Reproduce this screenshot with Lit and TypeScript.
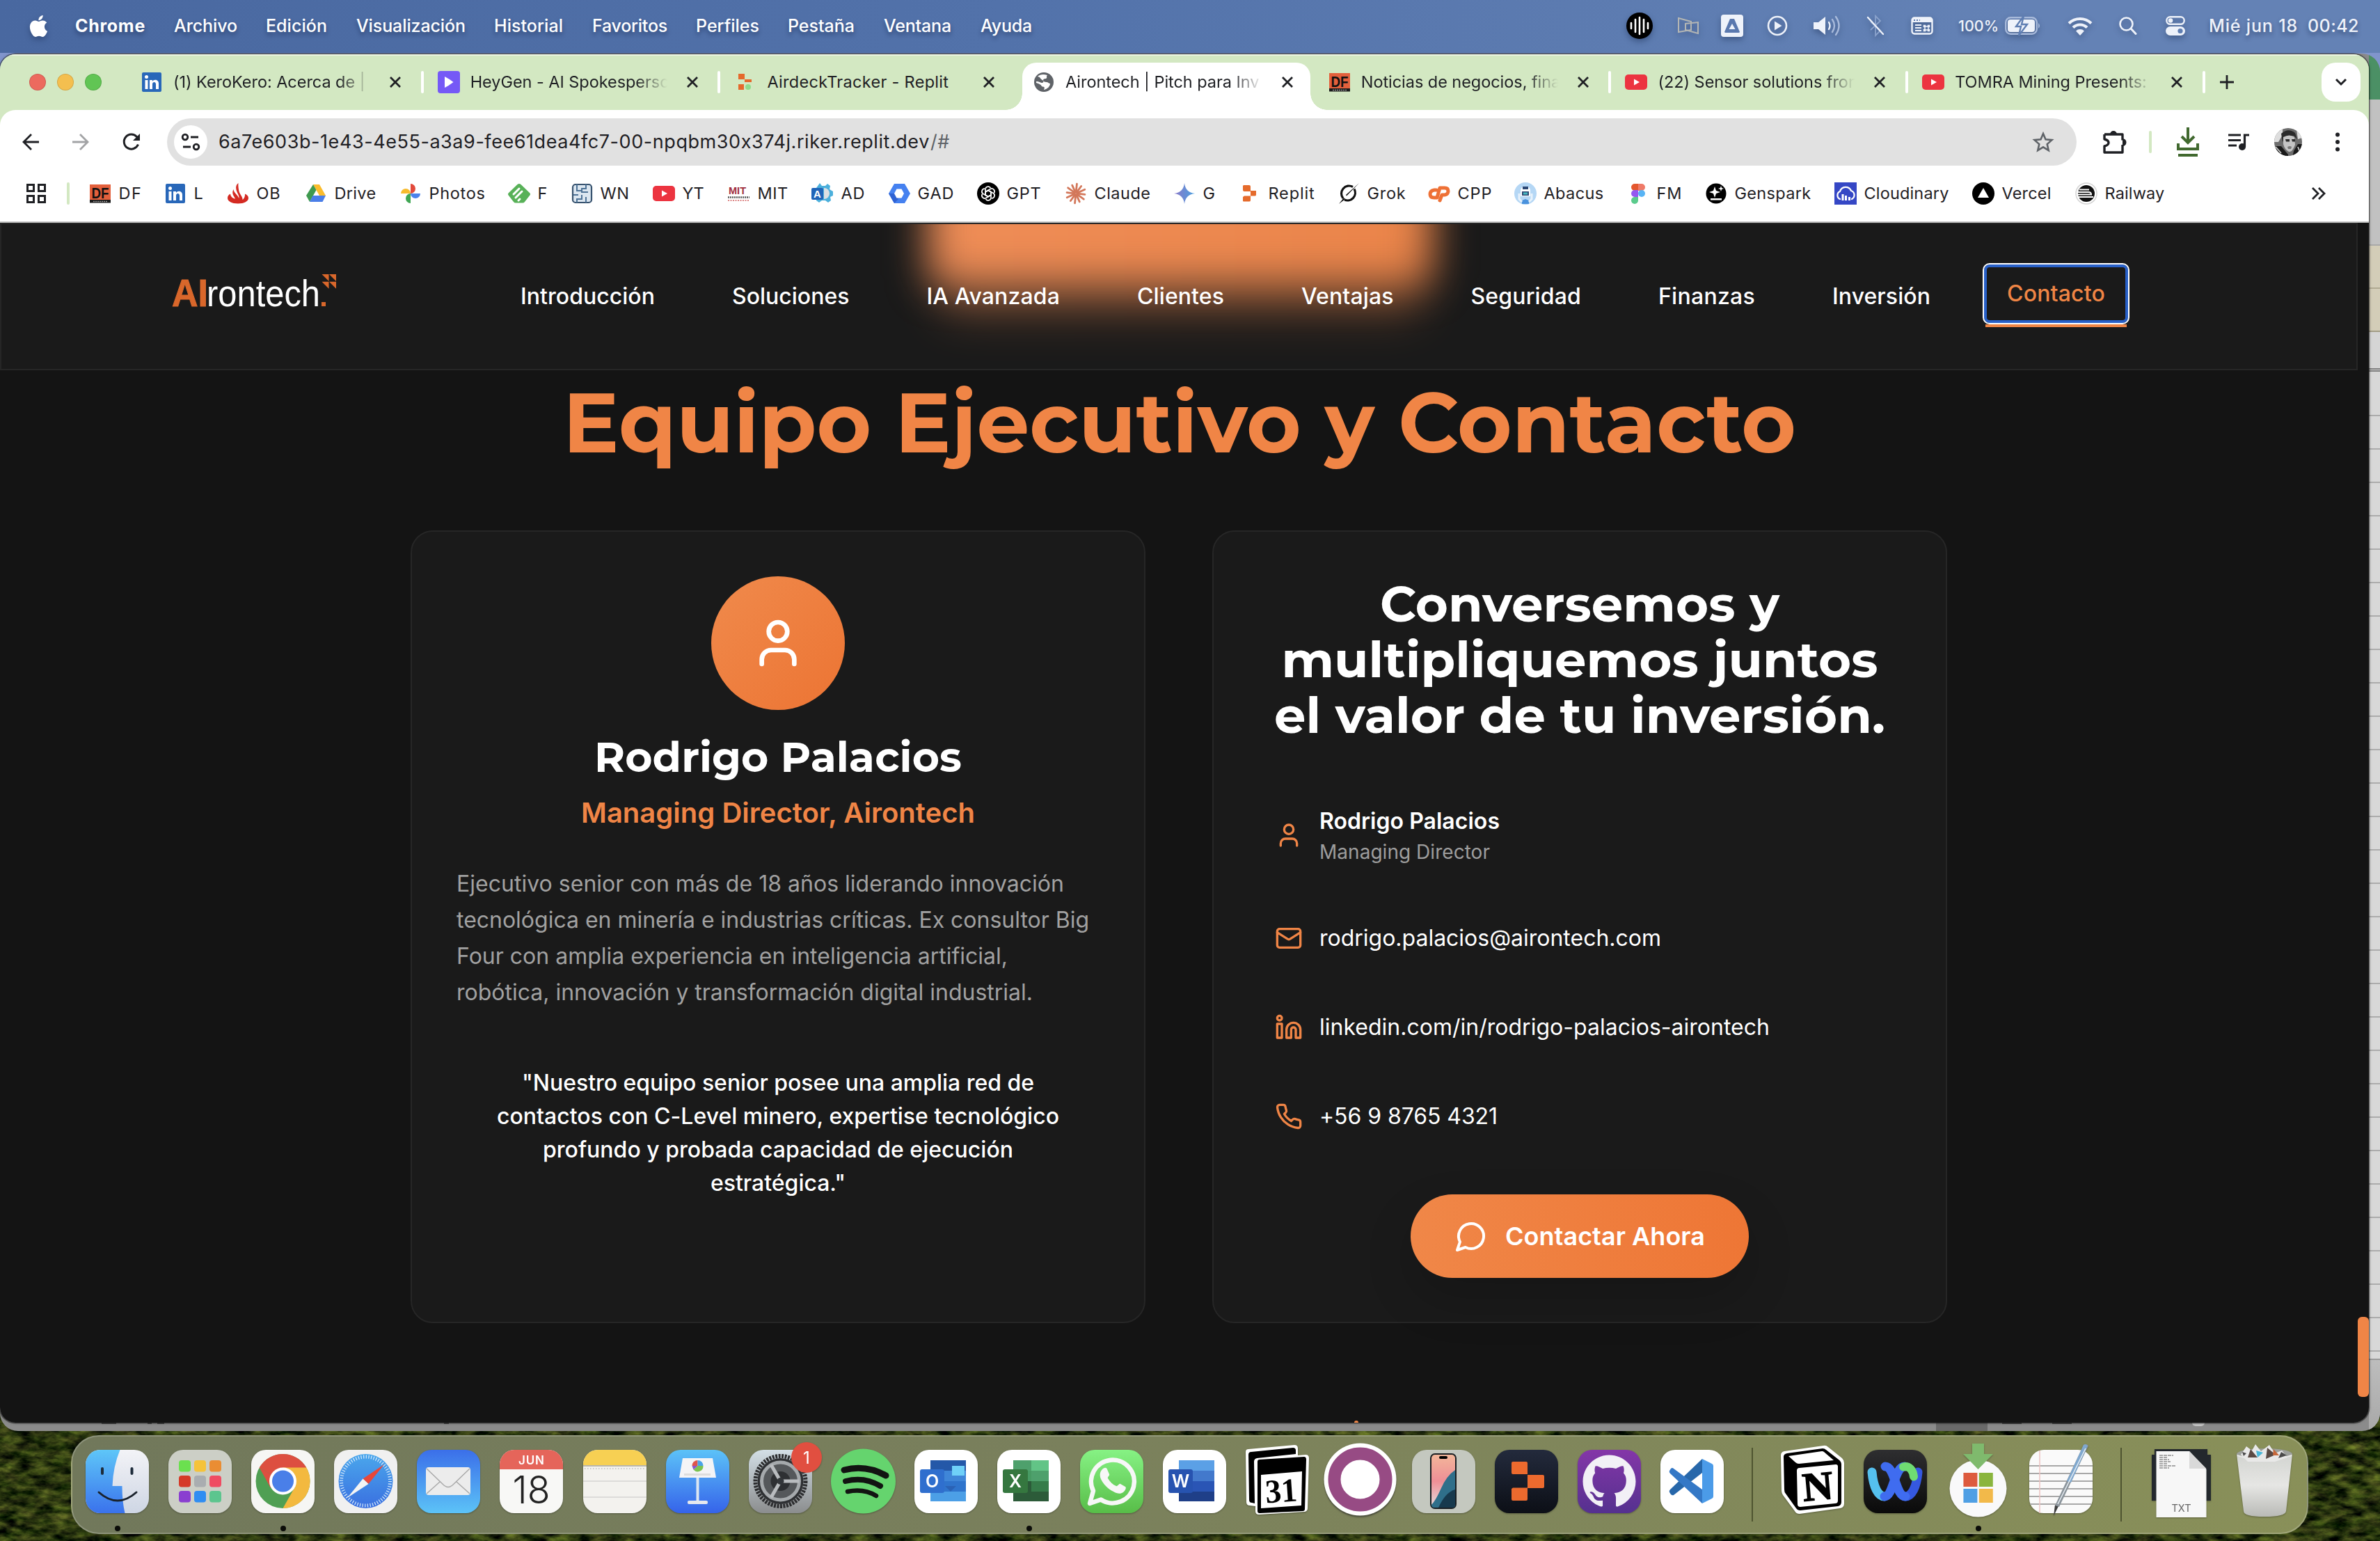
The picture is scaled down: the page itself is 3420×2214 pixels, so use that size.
import { LitElement, html, svg, css, type TemplateResult, type SVGTemplateResult } from "lit";
import { customElement, property } from "lit/decorators.js";
import { classMap } from "lit/directives/class-map.js";

const FONT = css`"Inter", "Liberation Sans", sans-serif`;

/* A run of text tracked to an exact measure. */
@customElement("fit-text")
class FitText extends LitElement {
  @property({ type: Number }) width = 0;
  static styles = css`
    :host { display: inline-block; white-space: pre; flex: none; }
    span { display: inline-block; }
  `;
  render() { return html`<span><slot></slot></span>`; }
  firstUpdated() {
    this.fit();
    document.fonts.ready.then(() => this.fit());
  }
  private fit() {
    const el = this.renderRoot.querySelector("span") as HTMLElement;
    el.style.letterSpacing = "0px";
    const natural = el.getBoundingClientRect().width;
    const n = (this.textContent ?? "").length;
    if (!natural || !n) return;
    this.style.width = `${this.width}px`;
    el.style.letterSpacing = `${(this.width - natural) / n}px`;
  }
}

const icon = (size: number, box: string, body: SVGTemplateResult, w = size) =>
  html`<svg width=${w} height=${size} viewBox=${box} fill="none">${body}</svg>`;

/* ---------------------------------------------------------------- menu bar */

const MENUS: [string, number, number][] = [
  ["Chrome", 101, 41], ["Archivo", 91, 41], ["Edición", 88, 42], ["Visualización", 157, 41],
  ["Historial", 99, 42], ["Favoritos", 108, 41], ["Perfiles", 91, 41], ["Pestaña", 96, 42],
  ["Ventana", 97, 42], ["Ayuda", 74, 0],
];

@customElement("menu-bar")
class MenuBar extends LitElement {
  static styles = css`
    :host { display: flex; align-items: center; justify-content: space-between; height: 76px; box-sizing: border-box;
      padding: 0 30px 2px 40px; color: #fff; font: 500 25px/36px ${FONT};
      background: linear-gradient(90deg, #4968a0, #5272aa 42%, #6482b5 85%, #6482b5);
      text-shadow: 0 4px 6px rgba(10, 25, 60, .45); }
    .menus, .status { display: flex; align-items: center; }
    svg { filter: drop-shadow(0 4px 4px rgba(10, 25, 60, .35)); overflow: visible; }
    .apple { width: 30px; margin-right: 38px; display: flex; }
    .menu { display: flex; }
    .menu.app { font-weight: 700; }
    .status svg { flex: none; }
    .pct { font-size: 21.5px; }
    .status { color: #eef2fa; }
  `;
  render() {
    const gap = (n: number) => html`<span style="width:${n}px"></span>`;
    return html`
      <div class="menus">
        <span class="apple">${icon(31, "0 0 24 24", svg`<path fill="#fff" d="M12.152 6.896c-.948 0-2.415-1.078-3.96-1.04-2.04.027-3.91 1.183-4.961 3.014-2.117 3.675-.546 9.103 1.519 12.09 1.013 1.454 2.208 3.09 3.792 3.039 1.52-.065 2.09-.987 3.935-.987 1.831 0 2.35.987 3.96.948 1.637-.026 2.676-1.48 3.676-2.948 1.156-1.688 1.636-3.325 1.662-3.415-.039-.013-3.182-1.221-3.22-4.857-.026-3.04 2.48-4.494 2.597-4.559-1.429-2.09-3.623-2.324-4.39-2.376-2-.156-3.675 1.09-4.61 1.09zM15.53 3.83c.843-1.012 1.4-2.427 1.245-3.83-1.207.052-2.662.805-3.532 1.818-.78.896-1.454 2.338-1.273 3.714 1.338.104 2.715-.688 3.559-1.701"/>`)}</span>
        ${MENUS.map(([t, w, g], i) => html`<span class=${classMap({ menu: true, app: i === 0 })} style="margin-right:${g}px"><fit-text width=${w}>${t}</fit-text></span>`)}
      </div>
      <div class="status">
        ${icon(38, "0 0 38 38", svg`<circle cx="19" cy="19" r="19" fill="#000"/><path stroke="#fff" stroke-width="2.6" stroke-linecap="round" d="M7 15v8M13 10v18M19 7v24M25 10v18M31 15v8"/>`)}
        ${gap(35)}
        ${icon(24, "0 0 32 24", svg`<path stroke="#b4b6b4" stroke-width="2" d="M2 1l18 5v12L2 21zM12 9l18-2v16l-18-5z"/>`, 32)}
        ${gap(31)}
        ${icon(32, "0 0 32 32", svg`<rect width="32" height="32" rx="4" fill="#eef2fa"/><path fill="#5a78ae" d="M13 6h6l8 19a2 2 0 0 1-2 1H7a2 2 0 0 1-2-1z"/><path fill="#eef2fa" d="M16 13l4.500 8h-9z"/>`)}
        ${gap(34)}
        ${icon(30, "0 0 30 30", svg`<circle cx="15" cy="15" r="13" stroke="#eef2fa" stroke-width="2.6"/><path fill="#eef2fa" d="M11 8.500l10.500 6.500L11 21.500z"/>`)}
        ${gap(37)}
        ${icon(30, "0 0 40 30", svg`<path fill="#eef2fa" d="M0 10h7l10-8v26l-10-8H0z"/><path stroke="#eef2fa" stroke-width="2.400" stroke-linecap="round" d="M22 10q3 5 0 10"/><path stroke="#a8badb" stroke-width="2.400" stroke-linecap="round" d="M27 6q6 9 0 18M32 2q9 13 0 26"/>`, 40)}
        ${gap(36)}
        ${icon(30, "0 0 26 30", svg`<path stroke="#8aa2cc" stroke-width="1.800" d="M6 21l14-13-7-7v28l7-7L6 9"/><path stroke="#eef2fa" stroke-width="2.400" stroke-linecap="round" d="M2 3l22 24"/>`, 26)}
        ${gap(38)}
        ${icon(26, "0 0 32 26", svg`<rect x="1.500" y="1.500" width="29" height="23" rx="3.500" stroke="#eef2fa" stroke-width="2.400"/><path fill="#eef2fa" d="M2 2h28v6H2z"/><path stroke="#eef2fa" stroke-width="2.200" d="M6 12h9M6 16h9M6 20h9"/><path stroke="#5a78ae" stroke-width="2" stroke-dasharray="2 2" d="M4 5h9"/><path stroke="#eef2fa" stroke-width="1.500" d="M20 14h5v5h-5zM18.500 12.500h2v2h-2zM24.500 12.500h2v2h-2zM18.500 18.500h2v2h-2zM24.500 18.500h2v2h-2z"/>`, 32)}
        ${gap(36)}
        <span class="pct"><fit-text width="58">100%</fit-text></span>
        ${gap(9)}
        ${icon(26, "0 0 52 26", svg`<rect x="1.200" y="1.200" width="44.600" height="23.600" rx="7" stroke="#a8badb" stroke-width="2.400"/><rect x="4" y="4" width="39" height="18" rx="4" fill="#eef2fa"/><path fill="#a8badb" d="M48 9q4 4 0 8z"/><path fill="#eef2fa" stroke="#5f7eb2" stroke-width="2.400" d="M27-1L16 14h7l-3 13 12-16h-8z"/>`, 52)}
        ${gap(38)}
        ${icon(27, "0 0 36 27", svg`<path stroke="#eef2fa" stroke-width="4.200" d="M2 9.500a23 23 0 0 1 32 0M8 15.500a14.500 14.500 0 0 1 20 0"/><path fill="#eef2fa" d="M18 27l-6-6.500a8.500 8.500 0 0 1 12 0z"/>`, 36)}
        ${gap(38)}
        ${icon(26, "0 0 26 26", svg`<circle cx="10.500" cy="10.500" r="9" stroke="#eef2fa" stroke-width="2.600"/><path stroke="#eef2fa" stroke-width="3" stroke-linecap="round" d="M17 17l7 7.500"/>`)}
        ${gap(41)}
        ${icon(28, "0 0 28 28", svg`<rect x="1.300" y="1.300" width="25.400" height="10.500" rx="5.200" stroke="#eef2fa" stroke-width="2.400"/><circle cx="7" cy="6.500" r="3.300" fill="#eef2fa"/><rect y="15" width="28" height="13" rx="6.500" fill="#eef2fa"/><circle cx="21" cy="21.500" r="3.600" fill="#5f7eb2"/>`)}
        ${gap(34)}
        <fit-text width="128">Mié jun 18</fit-text>
        ${gap(14)}
        <fit-text width="74">00:42</fit-text>
      </div>`;
  }
}

/* ------------------------------------------------------------ site favicons */

const F: Record<string, SVGTemplateResult> = {
  linkedin: svg`<rect x="2" y="2" width="28" height="28" rx="2" fill="#2867b9"/><circle cx="8.500" cy="8.500" r="2.500" fill="#fff"/><path fill="#fff" d="M6.500 13h4v13h-4zM13 13h4v2c2-3.500 9-3 9 3v8h-4v-7c0-4-5-4-5 0v7h-4z"/>`,
  heygen: svg`<rect width="32" height="32" rx="4" fill="#7559f6"/><path fill="#fff" d="M10 8q6 3 12.500 8Q16 21 10 24z"/>`,
  replitTab: svg`<path fill="#e5692c" d="M6 4h9v8H6zM15 12h10v4H15zM6 19h8v8H6z"/><circle cx="20" cy="23" r="4" fill="#8fdc8c"/>`,
  globe: svg`<circle cx="16" cy="16" r="14" fill="#5f6368"/><path fill="#fff" d="M7 8c4 0 4 4 7 5 2 1 2 3 0 4-2 .5-4-2-9-2v2c6 2 7 3 8 5 1 1 3 0 4 2l-1 3c5-1 9-5 9-9-2 0-3-2-5-2-3 0-5-1-5-3 1-3 4-1 5-3 1-1-1-2 1-4-6-2-11-1-14 2z"/>`,
  df: svg`<rect x="1" y="3" width="30" height="26" fill="#e3603c"/><rect x="1" y="25" width="30" height="4.500" fill="#1b1b1b"/><text x="16" y="22.500" text-anchor="middle" textLength="25" lengthAdjust="spacingAndGlyphs" font-size="22" font-family="Liberation Sans" font-weight="700" fill="#111">DF</text><path stroke="#999" stroke-width="1.500" stroke-dasharray="2 1" d="M6 27.500h20"/>`,
  youtube: svg`<rect y="5" width="32" height="22" rx="5" fill="#ec3440"/><path fill="#fff" d="M13 11.500l8 4.500-8 4.500z"/>`,
  santander: svg`<path fill="#d42a22" d="M5 16.500C2 18 1 20 1 22.500c0 4.500 6 8 15 8s15-3.500 15-8c0-2.500-1.500-4.500-5-6 .3 4-1 6.500-3.500 8.500.5-4-4-8-5-12-.8-4-1.500-8-1-12-3 2-4 5.500-3 9.500 1.200 5 4.500 8 4 12.500-2-5-7.500-8-8-13-1 2-1.500 3.500-1 6.500 .5 2.500 2 4 3.500 7C8 23 5.500 20.500 5 16.500z"/>`,
  drive: svg`<path fill="#fbbc2c" d="M12 3h9l9 16h-9z"/><path fill="#3f9a4f" d="M12 3l4.500 8L7 28l-5-9z"/><path fill="#4a7ee8" d="M11.500 19H30l-4.500 9H7z"/>`,
  photos: svg`<path fill="#e24a3b" d="M16 2a7 7 0 0 1 0 14z"/><path fill="#4b83ec" d="M16 16h14a7 7 0 0 1-14 0z"/><path fill="#3fa653" d="M16 16v14a7 7 0 0 1 0-14z"/><path fill="#f7bb2e" d="M16 16H2a7 7 0 0 1 14 0z"/>`,
  feedly: svg`<path fill="#58b158" d="M13.500 3q2.500-2 5 0L31 15q2 2 0 4l-7 9q-1 1.500-3 1.500H11q-2 0-3-1.500l-7-9q-2-2 0-4z"/><path stroke="#fff" stroke-width="3" stroke-linecap="round" d="M8 17l8-8M11 22l9-9M15 26l2-2"/>`,
  wn: svg`<rect x="3" y="3" width="27" height="26" rx="4" fill="#dbe6f0" stroke="#38536f" stroke-width="2.200"/><path stroke="#4d7296" stroke-width="2" d="M9 3v9h6M22 3v6h-6v5h9M9 29v-5h7v-6M22 29v-8M4 18h7"/>`,
  mit: svg`<text x="1" y="17" textLength="25" lengthAdjust="spacingAndGlyphs" font-size="15" font-family="Liberation Sans" font-weight="700" fill="#a03040">MIT</text><path stroke="#555" stroke-width="2.500" stroke-dasharray="2 1" d="M0 21.500h31"/><path stroke="#d88" stroke-width="1.800" stroke-dasharray="2 1.500" d="M0 26h31"/>`,
  ad: svg`<path fill="#4cb0dc" d="M12 1l3 4h5l3-3 4 3-1 5 5 3v6l-4 2 1 5-4 3-4-3h-5l-4 3-4-3V8z"/><path fill="#dcdfe3" d="M18 8a8 8 0 0 1 0 16z"/><rect y="8" width="17" height="17" rx="2" fill="#1f64b8"/><text x="8.500" y="22" text-anchor="middle" font-size="15" font-family="Liberation Sans" font-weight="700" fill="#fff">A</text>`,
  gad: svg`<path fill="#4581f0" d="M9 2h15l8 14-8 14H9L1 16z"/><path fill="#2f62d3" d="M1 16h10l4 8-6 6z"/><path fill="#fff" d="M12.500 9.500h7l3.500 6.500-3.500 6.500h-7L9 16z"/>`,
  gpt: svg`<circle cx="16" cy="16" r="16" fill="#000"/>${[0, 60, 120, 180, 240, 300].map(a => svg`<path transform="rotate(${a} 16 16)" stroke="#fff" stroke-width="1.700" d="M12 18.300V10a4 4 0 0 1 7.500-1.800M12 13.700l4-2.300 4 2.300"/>`)}`,
  claude: svg`${[0, 30, 60, 90, 120, 150, 180, 210, 240, 270, 300, 330].map((a, i) => svg`<path transform="rotate(${a + 6} 16 16)" stroke="#d3775a" stroke-width="2.800" stroke-linecap="round" d="M16 14V${i % 2 ? 3 : 2}"/>`)}`,
  gemini: svg`<defs><linearGradient id="gm"><stop offset="0" stop-color="#8b78c8"/><stop offset="1" stop-color="#4aa0e0"/></linearGradient></defs><path fill="url(#gm)" d="M16 1c1 9 6 14 15 15-9 1-14 6-15 15C15 22 10 17 1 16 10 15 15 10 16 1z"/>`,
  replit: svg`<path fill="#e56b2c" d="M7 4h8q2 0 2 2v7H8q-2 0-2-2V5zM17 12h8v6q0 1.500-2 1.500h-6zM8 19.500h9V26q0 1.500-2 1.500H7q-1 0-1-1V21z"/>`,
  grok: svg`<path stroke="#111" stroke-width="3.200" d="M24 9.500a11 11 0 0 1-14 15.500M8 23A11 11 0 0 1 22 6.500"/><path fill="#111" d="M31 1L13 19.500 12 18zM2 31l7-9 2 2z"/>`,
  cpp: svg`<path stroke="#ee7136" stroke-width="5" stroke-linecap="round" stroke-linejoin="round" d="M12 11H9q-6 1-6 6t6 5h4l4-14h7q5 0 5 4.500t-5 5.500h-4l-3 8"/>`,
  abacus: svg`<circle cx="16" cy="16" r="16" fill="#b5d7f5"/><path fill="#fff" d="M9 12q0-6 7-6t7 6v8H9z"/><path fill="#2c4773" d="M12 6h8v4h-8zM11 13h10v6H11z"/><path fill="#46b8c0" d="M13 14.500h6v3h-6z"/><path fill="#4a92dd" d="M11 26l5-2 5 2v5H11z"/><path stroke="#e8f2fb" stroke-width="3" d="M7 16v8l4 4M25 16v8l-4 4"/>`,
  figma: svg`<path fill="#e4572e" d="M16 2h-5a5 5 0 0 0 0 10h5z"/><path fill="#ef7a68" d="M16 2h5a5 5 0 0 1 0 10h-5z"/><path fill="#9557f0" d="M16 11h-5a5 5 0 0 0 0 10h5z"/><circle cx="21" cy="16" r="5" fill="#58b4f5"/><path fill="#5bcb8d" d="M16 21h-5a5 5 0 1 0 5 5z"/>`,
  genspark: svg`<circle cx="16" cy="16" r="14.500" fill="#000"/><path fill="#fff" d="M14 6l2 6 6 2-6 2-2 6-2-6-6-2 6-2zM23 5l1 3 3 1-3 1-1 3-1-3-3-1 3-1zM8 23h16v2.500H8z"/>`,
  cloudinary: svg`<rect width="32" height="32" fill="#3547c5"/><path stroke="#fff" stroke-width="2.200" stroke-linecap="round" d="M8 24a6 6 0 0 1 0-11 8.500 8.500 0 0 1 16-1 6.500 6.500 0 0 1 1 12"/><path fill="#fff" d="M10.500 17h3v9h-3zM15 19h3v7h-3zM20 21h3v5h-3z"/>`,
  vercel: svg`<circle cx="16" cy="16" r="16" fill="#000"/><path fill="#fff" d="M16 8l8 14H8z"/>`,
  railway: svg`<circle cx="16" cy="16" r="15" fill="#fff" stroke="#d4d4d4" stroke-width="1.500"/><circle cx="16" cy="16" r="12" fill="#111"/><path stroke="#fff" stroke-width="1.800" d="M4 14h15q4 0 4 3M4 17.500h20M4 21h22M6 10.500h14"/>`,
};

/* --------------------------------------------------------- browser chrome */

const TABS: [string, string, boolean][] = [
  ["linkedin", "(1) KeroKero: Acerca de |", true],
  ["heygen", "HeyGen - AI Spokesperso", true],
  ["replitTab", "AirdeckTracker - Replit", false],
  ["globe", "Airontech | Pitch para Inv", true],
  ["df", "Noticias de negocios, fina", true],
  ["youtube", "(22) Sensor solutions fron", true],
  ["youtube", "TOMRA Mining Presents:", true],
];

/* favicon, label, label width, distance to the next bookmark */
const MARKS: [string, string, number, number][] = [
  ["df", "DF", 34, 108], ["linkedin", "L", 15, 90], ["santander", "OB", 35, 112], ["drive", "Drive", 60, 136],
  ["photos", "Photos", 81, 156], ["feedly", "F", 15, 90], ["wn", "WN", 42, 118], ["youtube", "YT", 31, 108],
  ["mit", "MIT", 44, 120], ["ad", "AD", 35, 110], ["gad", "GAD", 53, 128], ["gpt", "GPT", 50, 126],
  ["claude", "Claude", 81, 156], ["gemini", "G", 19, 94], ["replit", "Replit", 67, 142], ["grok", "Grok", 56, 130],
  ["cpp", "CPP", 50, 124], ["abacus", "Abacus", 86, 162], ["figma", "FM", 37, 112], ["genspark", "Genspark", 110, 186],
  ["cloudinary", "Cloudinary", 122, 198], ["vercel", "Vercel", 71, 148], ["railway", "Railway", 86, 200],
];

@customElement("browser-chrome")
class BrowserChrome extends LitElement {
  static styles = css`
    :host { display: block; height: 242px; background: #d3e8c2; color: #1f2024; font: 400 23.500px/32px ${FONT};
      box-shadow: inset 0 2px 0 #eef7e6; }
    svg { display: block; flex: none; overflow: visible; }
    .tabs { display: flex; align-items: center; height: 80px; }
    .lights { display: flex; gap: 16px; width: 138px; padding-left: 42px; }
    .light { width: 24px; height: 24px; border-radius: 50%; box-sizing: border-box; border: 1.500px solid rgba(0, 0, 0, .12); }
    .light.r { background: #ec6a5e; } .light.y { background: #f4bf4f; } .light.g { background: #61c554; }
    .tab { display: flex; align-items: center; width: 426.700px; height: 80px; padding-left: 22px; box-sizing: border-box; position: relative; }
    .tab .name { width: 283px; margin-left: 15px; white-space: nowrap; letter-spacing: -.05px; }
    .tab .name.cut { -webkit-mask-image: linear-gradient(90deg, #000 84%, transparent 100%); mask-image: linear-gradient(90deg, #000 84%, transparent 100%); }
    .tab .x { margin-left: 28px; }
    .tab .bar { width: 4px; height: 32px; border-radius: 2px; background: #fff; margin-left: auto; position: relative; left: 2px; }
    .tab.on::before { content: ""; position: absolute; inset: 12px 4px 0 9px; border-radius: 20px 20px 0 0; background: #fff; }
    .tab.on::after { content: ""; position: absolute; bottom: 0; left: -15px; right: -20px; height: 24px;
      background: radial-gradient(circle at 0 0, transparent 23.500px, #fff 24px) 0 0 / 24px 24px no-repeat,
        radial-gradient(circle at 100% 0, transparent 23.500px, #fff 24px) 100% 0 / 24px 24px no-repeat; }
    .tab.on > * { position: relative; z-index: 1; left: 2px; }
    .plus { margin-left: 23px; }
    .chev { margin-left: auto; margin-right: 12px; width: 56px; height: 56px; border-radius: 20px; background: #fff; display: grid; place-items: center; }
    .panel { background: #fff; border-radius: 22px 22px 0 0; height: 160px; border-bottom: 2px solid #cbcccb; }
    .tools { display: flex; align-items: center; height: 92px; padding: 0 34px 0 32px; }
    .omni { display: flex; align-items: center; flex: none; width: 2744px; height: 68px; border-radius: 34px; background: #e1e1e1;
      margin: 0 38px 0 38px; padding: 0 33px 0 10px; box-sizing: border-box; font-size: 27px; }
    .tune { width: 48px; height: 48px; border-radius: 50%; background: #fff; display: grid; place-items: center; margin-right: 16px; }
    .url { display: flex; flex: 1; }
    .dim { color: #5f6368; margin-left: -2px; }
    .sep { width: 4px; height: 32px; border-radius: 2px; background: #d3e8c2; flex: none; }
    .marks { display: flex; align-items: center; height: 56px; padding: 0 62px 0 38px; }
    .mark { display: flex; align-items: center; flex: none; gap: 10.500px; }
    .more { margin-left: auto; }
  `;
  render() {
    const stroke = "#1f2024";
    return html`
      <div class="tabs">
        <div class="lights"><i class="light r"></i><i class="light y"></i><i class="light g"></i></div>
        ${TABS.map(([f, t, cut], i) => html`<div class=${classMap({ tab: true, on: i === 3 })}>
          ${icon(32, "0 0 32 32", F[f])}
          <span class=${classMap({ name: true, cut })}>${cut ? t : html`<fit-text width="261">${t}</fit-text>`}</span>
          <span class="x">${icon(16, "0 0 16 16", svg`<path stroke=${stroke} stroke-width="2.800" d="M1 1l14 14M15 1L1 15"/>`)}</span>
          ${i === 2 || i === 3 ? "" : html`<i class="bar"></i>`}
        </div>`)}
        <span class="plus">${icon(20, "0 0 20 20", svg`<path stroke=${stroke} stroke-width="2.800" d="M10 0v20M0 10h20"/>`)}</span>
        <span class="chev">${icon(12, "0 0 16 12", svg`<path stroke=${stroke} stroke-width="3" d="M1 2l7 7 7-7"/>`, 16)}</span>
      </div>
      <div class="panel">
        <div class="tools">
          ${icon(24, "0 0 24 24", svg`<path stroke=${stroke} stroke-width="2.800" d="M24 12H3M13 1L2 12l11 11"/>`)}
          <span style="width:48px"></span>
          ${icon(24, "0 0 24 24", svg`<path stroke="#a2a3a5" stroke-width="2.800" d="M0 12h21M11 1l11 11-11 11"/>`)}
          <span style="width:48px"></span>
          ${icon(26, "0 0 26 26", svg`<path stroke=${stroke} stroke-width="3" d="M22.500 16.500A10.500 10.500 0 1 1 20.500 5.500L24 9"/><path fill=${stroke} d="M25 1v10H15z"/>`)}
          <div class="omni">
            <span class="tune">${icon(26, "0 0 28 26", svg`<circle cx="6" cy="6" r="3.800" stroke=${stroke} stroke-width="2.800"/><circle cx="22" cy="20" r="3.800" stroke=${stroke} stroke-width="2.800"/><path stroke=${stroke} stroke-width="2.800" d="M14 6h11M3 20h11"/>`, 28)}</span>
            <span class="url"><fit-text width="1025">6a7e603b-1e43-4e55-a3a9-fee61dea4fc7-00-npqbm30x374j.riker.replit.dev</fit-text><fit-text class="dim" width="28">/#</fit-text></span>
            ${icon(30, "0 0 30 30", svg`<path stroke="#5f6368" stroke-width="2.600" d="M15 3l3.500 8.300 9 .8-6.800 6 2 8.900L15 22.300 7.300 27l2-8.900-6.800-6 9-.8z"/>`)}
          </div>
          ${icon(36, "0 0 34 36", svg`<path stroke=${stroke} stroke-width="3.400" stroke-linejoin="round" d="M2 7h26v8.500M28 22v11H2V24q6-1.500 6-5t-6-5V7"/><path fill=${stroke} d="M10 7a5 5 0 0 1 10 0zM28 13a5.500 5.500 0 0 1 0 11z"/>`, 34)}
          <span style="width:32px"></span><i class="sep"></i><span style="width:36px"></span>
          ${icon(44, "0 0 32 44", svg`<path stroke="#41692f" stroke-width="4" d="M16 1v20M7 14l9 9 9-9M2 24v8h28v-8M2 41h28"/>`, 32)}
          <span style="width:42px"></span>
          ${icon(26, "0 0 30 26", svg`<path stroke=${stroke} stroke-width="3.200" d="M0 3h18M0 10.500h18M0 18h12M23.500 20V3H30"/><circle cx="20" cy="20" r="5" fill=${stroke}/>`, 30)}
          <span style="width:36px"></span>
          ${icon(40, "0 0 40 40", svg`<defs><clipPath id="av"><circle cx="20" cy="20" r="20"/></clipPath></defs><g clip-path="url(#av)"><rect width="40" height="40" fill="#6d6d6d"/><path fill="#dedede" d="M0 0h12v10L6 20H0zM32 2h8v12l-6 2z"/><path fill="#2a2a2a" d="M10 8q10-9 20-1l3 9-5-5-12 1-4 8z"/><path fill="#c4c4c4" d="M13 13q9-5 16 0l1 11q-4 11-9 10-6-3-8-11z"/><path fill="#2a2a2a" d="M16 16h6v3.500h-5zM25 16h5v3.500h-4z"/><path fill="#777" d="M19 27q4-2 6 0l-1 3h-4z"/><path fill="#1a1a1a" d="M2 26h8l10 12v4H0zM28 33l6-10h8v20H26z"/><path stroke="#ccc" stroke-width="1.800" d="M2 27l8 9M0 32l5 6M34 27l3 8"/></g>`)}
          <span style="width:47px"></span>
          ${icon(28, "0 0 8 28", svg`<circle cx="4" cy="3.500" r="3" fill=${stroke}/><circle cx="4" cy="14" r="3" fill=${stroke}/><circle cx="4" cy="24.500" r="3" fill=${stroke}/>`, 8)}
        </div>
        <div class="marks">
          ${icon(28, "0 0 28 28", svg`<path stroke=${stroke} stroke-width="3" d="M1.500 1.500h9v9h-9zM17.500 1.500h9v9h-9zM1.500 17.500h9v9h-9zM17.500 17.500h9v9h-9z"/>`)}
          <span style="width:30px"></span><i class="sep"></i><span style="width:28px"></span>
          ${MARKS.map(([f, t, w, next]) => html`<span class="mark" style="width:${next}px">${icon(32, "0 0 32 32", F[f])}<fit-text width=${w}>${t}</fit-text></span>`)}
          <span class="more">${icon(20, "0 0 20 20", svg`<path stroke=${stroke} stroke-width="2.800" d="M1 2l8 8-8 8M10 2l8 8-8 8"/>`)}</span>
        </div>
      </div>`;
  }
}

/* -------------------------------------------------------------- site page */

const NAV: [string, number][] = [
  ["Introducción", 193], ["Soluciones", 168.5], ["IA Avanzada", 191.5], ["Clientes", 125], ["Ventajas", 132.5],
  ["Seguridad", 158.5], ["Finanzas", 139], ["Inversión", 141],
];

const lucide = {
  user: svg`<path d="M19 21v-2a4 4 0 0 0-4-4H9a4 4 0 0 0-4 4v2"/><circle cx="12" cy="7" r="4"/>`,
  mail: svg`<rect width="20" height="16" x="2" y="4" rx="2"/><path d="m22 7-8.970 5.700a1.940 1.940 0 0 1-2.060 0L2 7"/>`,
  linkedin: svg`<path d="M16 8a6 6 0 0 1 6 6v7h-4v-7a2 2 0 0 0-2-2 2 2 0 0 0-2 2v7h-4v-7a6 6 0 0 1 6-6z"/><rect width="4" height="12" x="2" y="9"/><circle cx="4" cy="4" r="2"/>`,
  phone: svg`<path d="M22 16.920v3a2 2 0 0 1-2.180 2 19.790 19.790 0 0 1-8.630-3.070 19.500 19.500 0 0 1-6-6 19.790 19.790 0 0 1-3.070-8.670A2 2 0 0 1 4.110 2h3a2 2 0 0 1 2 1.720 12.840 12.840 0 0 0 .7 2.810 2 2 0 0 1-.45 2.110L8.090 9.910a16 16 0 0 0 6 6l1.270-1.270a2 2 0 0 1 2.110-.45 12.840 12.840 0 0 0 2.810.7A2 2 0 0 1 22 16.920z"/>`,
  chat: svg`<path d="M7.900 20A9 9 0 1 0 4 16.100L2 22Z"/>`,
};
const line = (size: number, body: SVGTemplateResult) =>
  icon(size, "0 0 24 24", svg`<g stroke="currentColor" stroke-width="2" stroke-linecap="round" stroke-linejoin="round">${body}</g>`);

@customElement("site-page")
class SitePage extends LitElement {
  static styles = css`
    :host { display: block; height: 1724px; background: #141414; color: #fff; font: 400 32px/48px ${FONT}; position: relative; overflow: hidden; }
    svg { display: block; flex: none; overflow: visible; }
    .nav { position: relative; overflow: hidden; display: flex; align-items: center; width: 3388px; height: 212px; box-sizing: border-box;
      border: 2px solid #262626; background: #1a1a1a; padding-left: 245px; }
    .glow { position: absolute; left: 1334px; top: -120px; width: 720px; height: 206px; background: linear-gradient(90deg, #ef8d57, #ea8449); border-radius: 20px; filter: blur(30px); }
    .glow.low { left: 1350px; width: 690px; height: 252px; opacity: .3; filter: blur(32px); }
    .logo { width: 501px; padding-bottom: 10px; position: relative; }
    .links { display: flex; align-items: center; gap: 111px; position: relative; font-weight: 500; }
    .active { margin-left: -36px; transform: translateY(-2px); color: #ef8545; width: 211px; box-sizing: border-box; height: 92px; }
    .ring { height: 88px; box-sizing: border-box; border: 2px solid #fff; border-radius: 10px; box-shadow: inset 0 0 0 4px #2860c8; display: grid; place-items: center; }
    .under { height: 4px; margin: 0 4px; background: #ef8545; }
    .title { height: 150px; display: grid; place-items: center; width: 3390px; font: 700 120px/150px "Montserrat", ${FONT}; color: #f08546; }
    .cards { display: grid; grid-template-columns: 1056px 1056px; gap: 96px; width: 2208px; margin: 80px 0 0 590px; }
    .card { height: 1139px; box-sizing: border-box; border: 2px solid #262626; border-radius: 32px; background: #1a1a1a; padding: 64px;
      display: flex; flex-direction: column; align-items: center; }
    .avatar { width: 192px; height: 192px; border-radius: 50%; background: linear-gradient(135deg, #f08a4c, #ec7433); display: grid; place-items: center; }
    .name { font: 700 60px/72px "Montserrat", ${FONT}; margin-top: 32px; }
    .role { font-weight: 600; font-size: 40px; color: #f08546; margin-top: 20px; height: 48px; }
    .bio { width: 924px; margin-top: 52px; line-height: 52px; color: #a1a1a1; display: flex; flex-direction: column; align-items: flex-start; }
    .quote { margin-top: 80px; font-weight: 500; display: flex; flex-direction: column; align-items: center; }
    .pitch { font: 700 72px/80px "Montserrat", ${FONT}; display: flex; flex-direction: column; align-items: center; margin-top: -1px; }
    .rows { width: 876px; margin-top: 89px; display: flex; flex-direction: column; gap: 80px; }
    .row { display: flex; align-items: center; gap: 24px; }
    .row svg { color: #f08546; }
    .who { display: flex; flex-direction: column; height: 88px; }
    .strong { font-weight: 600; }
    .sub { font-size: 28px; line-height: 40px; color: #9d9d9d; }
    .cta { margin-top: 88px; width: 486px; height: 120px; flex: none; border-radius: 60px; background: linear-gradient(90deg, #f08748, #ee7635);
      display: flex; align-items: center; justify-content: center; gap: 25px; font-weight: 600; font-size: 36px; box-shadow: 0 30px 70px rgba(0, 0, 0, .16); }
    .thumb { position: absolute; left: 3388px; top: 1572px; width: 16px; height: 115px; border-radius: 6px; background: #f08546; }
  `;
  render() {
    const lines = (rows: [string, number][]) => rows.map(([t, w]) => html`<fit-text width=${w}>${t}</fit-text>`);
    const o = "#d9672b";
    return html`
      <div class="nav">
        <div class="glow low"></div>
        <div class="glow"></div>
        <div class="logo">${icon(60, "0 0 226 60", svg`
          <text x="0" y="49" font-family="Liberation Sans" font-weight="700" font-size="56" textLength="52" lengthAdjust="spacingAndGlyphs" fill=${o} stroke=${o} stroke-width="1">AI</text>
          <text x="50" y="49" font-family="Liberation Sans" font-size="53" textLength="163" lengthAdjust="spacingAndGlyphs" fill="#fff">rontech</text>
          <path fill=${o} d="M215 43h6v6h-6zM215.500 3h10v10zM226 3h10v10zM215.500 13.700h10v10zM226 13.700h10v10z"/>`, 226)}</div>
        <div class="links">
          ${NAV.map(([t, w]) => html`<fit-text width=${w}>${t}</fit-text>`)}
          <div class="active"><div class="ring"><fit-text width="141">Contacto</fit-text></div><div class="under"></div></div>
        </div>
      </div>
      <div class="title">${lines([["Equipo Ejecutivo y Contacto", 1772]])}</div>
      <div class="cards">
        <div class="card">
          <div class="avatar">${line(80, lucide.user)}</div>
          <div class="name">${lines([["Rodrigo Palacios", 528]])}</div>
          <div class="role">${lines([["Managing Director, Airontech", 566]])}</div>
          <div class="bio">${lines([
            ["Ejecutivo senior con más de 18 años liderando innovación", 873],
            ["tecnológica en minería e industrias críticas. Ex consultor Big", 909],
            ["Four con amplia experiencia en inteligencia artificial,", 792],
            ["robótica, innovación y transformación digital industrial.", 828]])}</div>
          <div class="quote">${lines([
            ["\"Nuestro equipo senior posee una amplia red de", 736],
            ["contactos con C-Level minero, expertise tecnológico", 808],
            ["profundo y probada capacidad de ejecución", 676],
            ["estratégica.\"", 194]])}</div>
        </div>
        <div class="card">
          <div class="pitch">${lines([["Conversemos y", 574], ["multipliquemos juntos", 857], ["el valor de tu inversión.", 878]])}</div>
          <div class="rows">
            <div class="row">${line(40, lucide.user)}<div class="who"><span class="strong">${lines([["Rodrigo Palacios", 259]])}</span><span class="sub">${lines([["Managing Director", 245]])}</span></div></div>
            <div class="row">${line(40, lucide.mail)}${lines([["rodrigo.palacios@airontech.com", 491]])}</div>
            <div class="row">${line(40, lucide.linkedin)}${lines([["linkedin.com/in/rodrigo-palacios-airontech", 647]])}</div>
            <div class="row">${line(40, lucide.phone)}${lines([["+56 9 8765 4321", 256]])}</div>
          </div>
          <div class="cta">${line(48, lucide.chat)}${lines([["Contactar Ahora", 287]])}</div>
        </div>
      </div>
      <div class="thumb"></div>`;
  }
}

/* ------------------------------------------------------------------- dock */

const tile = (fill: string) => svg`<rect x="14" y="21" width="91" height="91" rx="21" fill=${fill}/>`;
const office = (c: string[], badge: string, letter: string) => svg`${tile("#fff")}
  <rect x="37" y="36" width="51" height="15" fill=${c[0]}/><rect x="37" y="51" width="51" height="15" fill=${c[1]}/>
  <rect x="37" y="66" width="51" height="15" fill=${c[2]}/><rect x="37" y="81" width="51" height="14" fill=${c[3]}/>
  <rect x="22" y="49" width="35" height="34" rx="3" fill=${badge}/>
  <text x="39.500" y="75" text-anchor="middle" font-family="Inter" font-weight="600" font-size="25" fill="#fff">${letter}</text>`;

const COLORS = ["#6be04f", "#f5c33a", "#ea8d33", "#d53a28", "#a9adb0", "#ef4c62", "#8a3fd0", "#2f8df2", "#5cc58e"];

const D: Record<string, SVGTemplateResult> = {
  finder: svg`<defs><clipPath id="dk-clip"><rect x="14" y="21" width="91" height="91" rx="21"/></clipPath></defs>${tile("url(#dk-white)")}
    <path clip-path="url(#dk-clip)" fill="url(#dk-finder)" d="M14 21h49.500q-10 24-11 52h14q0 22 4 39H14z"/>
    <path stroke="#1d2b3a" stroke-width="4" stroke-linecap="round" d="M38 48v7M80.500 48v7"/><path stroke="#1a222c" stroke-width="3" stroke-linecap="round" d="M33 82q27 24 54 0"/>`,
  launch: svg`${tile("#cccfc6")}${COLORS.map((c, i) => svg`<rect x=${29 + (i % 3) * 22} y=${36 + Math.floor(i / 3) * 22} width="17" height="16.500" rx="4" fill=${c}/>`)}`,
  chrome: svg`${tile("#f6f6f4")}<circle cx="59.500" cy="66" r="39" fill="#4f9f53"/><path fill="#dd4f40" d="M59.500 66L25.700 46.500A39 39 0 0 1 93.300 46.500z"/><path fill="#dd4f40" d="M25.700 46.500L42 76l17.500-10z"/><path fill="#f3b93f" d="M59.500 46.500h33.800A39 39 0 0 1 59.500 105l17-30z"/><circle cx="59.500" cy="66" r="19.500" fill="#fff"/><circle cx="59.500" cy="66" r="15.500" fill="#4a7fe8"/>`,
  safari: svg`${tile("#f0f0f0")}<circle cx="59.500" cy="66" r="39" fill="url(#dk-safari)"/><circle cx="59.500" cy="66" r="35" stroke="#d8ebfa" stroke-width="5" stroke-dasharray="1.200 2.465"/><path fill="#e8473a" d="M86 42L63.500 70l-8-7.500z"/><path fill="#f4f4f4" d="M33 90l22.500-27.500 8 7.500z"/>`,
  mail: svg`${tile("url(#dk-mail)")}<rect x="27" y="46" width="64" height="40" rx="4" fill="#ececec"/><path stroke="#a9a9a9" stroke-width="1.500" d="M28 48l25 24q6 5 12 0l25-24M28 84l19-17M90 84L71 67"/>`,
  cal: svg`${tile("#f8f8f6")}<path clip-path="url(#dk-clip)" fill="#e5655a" d="M14 21h91v28H14z"/><text x="59.500" y="42" text-anchor="middle" font-family="Inter" font-weight="600" font-size="17" textLength="37" fill="#fff">JUN</text><text x="59.500" y="98" text-anchor="middle" font-family="Inter" font-weight="300" font-size="55" textLength="54" lengthAdjust="spacingAndGlyphs" fill="#222">18</text>`,
  notes: svg`${tile("#f3f2ee")}<path clip-path="url(#dk-clip)" fill="#f7d053" d="M14 21h91v22H14z"/><path stroke="#b9b7ac" stroke-width="2" d="M14 44h91"/><path stroke="#c9c9c9" stroke-width="2" stroke-dasharray="1.500 2.500" d="M16 48h88"/><path stroke="#d6d5d2" stroke-width="1.500" d="M14 66h91M14 89h91"/>`,
  keynote: svg`${tile("url(#dk-key)")}<path fill="#f4f4f6" d="M38 33h43l5 28H33z"/><path fill="#ddd" d="M40 55h38v3H40z"/><path fill="#e0544a" d="M59.500 44v-8a8 8 0 0 0-8 8z"/><path fill="#4aa3e8" d="M59.500 44v-8a8 8 0 0 1 8 8z"/><path fill="#7cc351" d="M59.500 44h8a8 8 0 0 1-14 5.600z"/><path fill="#8b56c8" d="M51.500 44h8l-6 5.600z"/><path fill="#dce6f2" d="M57.500 61h4v34h-4z"/><rect x="45" y="94" width="29" height="5" rx="2" fill="#e6e8ee"/>`,
  settings: svg`${tile("url(#dk-gear)")}<circle cx="59.500" cy="66" r="36" stroke="#2c2d2f" stroke-width="6" stroke-dasharray="3 1.500"/><circle cx="59.500" cy="66" r="33" fill="#2e3033"/><circle cx="59.500" cy="66" r="27" fill="#55585b" stroke="#a5a9ac" stroke-width="5"/><circle cx="59.500" cy="66" r="14" fill="#2e3033"/><path stroke="#b9bcbf" stroke-width="5" d="M59.500 66h27M59.500 66L46 42.500M59.500 66L46 89.500"/><circle cx="59.500" cy="66" r="5" fill="#33363a"/><circle cx="97" cy="32" r="22" fill="#e14f40"/><text x="97" y="40.500" text-anchor="middle" font-family="Inter" font-size="24" fill="#fff">1</text>`,
  spotify: svg`<circle cx="59.500" cy="66" r="46.500" fill="#65d46e"/><path stroke="#121412" stroke-linecap="round" stroke-width="9" d="M32 50q31-8 60 8"/><path stroke="#121412" stroke-linecap="round" stroke-width="8" d="M34 66q27-7 50 7"/><path stroke="#121412" stroke-linecap="round" stroke-width="6.500" d="M37 81q23-5 41 6"/>`,
  outlook: svg`${office(["#2458a8", "#3f86d8", "#2f74cc", "#4c9fe6"], "#2f6fce", "O")}<path fill="#6fd0f8" d="M68 44h18v14H68z"/><path fill="#2a62b5" d="M58 73h16l-8 8z"/>`,
  excel: svg`${tile("#fff")}<path fill="#4ea06c" d="M37 36h26v15H37zM63 51h25v15H63z"/><path fill="#62c486" d="M63 36h25v15H63z"/><path fill="#479a63" d="M37 51h26v15H37z"/><path fill="#367c4a" d="M63 66h25v15H63z"/><path fill="#2c5b39" d="M37 66h26v15h25v14H37z"/>
    <rect x="22" y="49" width="36" height="34" rx="3" fill="#35773f"/><text x="40" y="75" text-anchor="middle" font-family="Inter" font-weight="600" font-size="25" fill="#fff">X</text>`,
  whatsapp: svg`${tile("url(#dk-wa)")}<path stroke="#f7f7f7" stroke-width="6.500" stroke-linejoin="round" d="M28 98l5-18a31 31 0 1 1 11 12.500z"/><path fill="#f7f7f7" d="M46 49c3-3 6-3 7 0l3 7c1 2-3 4-2 6 3 5 7 9 12 11 2 1 4-4 6-3l7 4c2 1 0 6-3 8-4 3-9 2-14-1-8-4-14-10-18-18-2-5-2-10 2-14z"/>`,
  word: svg`${office(["#5ba0e6", "#4379cc", "#2a55b5", "#1f3f88"], "#2753b0", "W")}`,
  ncal: svg`<path fill="#fff" d="M14 24q0-4 4-4l66-6q5 0 5 5v10l11-1q5 0 5 5l-2 72q0 4-4 5l-66 4q-5 0-5-5v-7l-8-1q-5 0-5-5z"/><path fill="#000" d="M18 28q0-4 4-4l60-6q4 0 4 4v5L30 33q-4 1-4 5l1 60-4-1q-4 0-4-4zM31 38q0-3 3-3l64-4q3 0 3 4l-2 71q0 3-3 3l-62 3q-3 0-3-3z"/><path fill="#fff" d="M36 57l59-5-1 49-58 4z"/><text x="65" y="96" transform="rotate(-4 65 80)" text-anchor="middle" font-family="Liberation Serif" font-weight="700" font-size="48" textLength="46" lengthAdjust="spacingAndGlyphs" fill="#000">31</text>`,
  ring: svg`<circle cx="59.500" cy="66" r="52" fill="#333" opacity=".35"/><circle cx="59.500" cy="63.500" r="52" fill="#fff"/><circle cx="59.500" cy="63.500" r="37" stroke="#974b84" stroke-width="18"/>`,
  phone: svg`${tile("#c4c8bf")}<rect x="41" y="27" width="36" height="78" rx="6" fill="url(#dk-phone)" stroke="#1a1f22" stroke-width="2"/><path fill="#2f6f8a" d="M76 50q-12 8-20 26T42 100q0 4 4 4h26q4 0 4-4z"/><path fill="#17394d" d="M76 78q-14 4-24 26h20q4 0 4-4z"/><rect x="53" y="30" width="12" height="4" rx="2" fill="#000"/>`,
  replit: svg`${tile("url(#dk-dark)")}<path fill="#ec6a2e" d="M40 38h19q2 0 2 2v16H40q-2 0-2-2V40q0-2 2-2zM61 57h22q2 0 2 2v15q0 2-2 2H61zM40 75.500h21V92q0 2-2 2H40q-2 0-2-2V77z"/>`,
  github: svg`${tile("url(#dk-git)")}<path transform="translate(21.500 28.500) scale(4.750)" fill="#f2f0f6" d="M8 0C3.580 0 0 3.580 0 8c0 3.540 2.290 6.530 5.470 7.590.4.070.55-.17.55-.38 0-.19-.01-.82-.01-1.490-2.010.37-2.530-.49-2.690-.94-.09-.23-.48-.94-.82-1.130-.28-.15-.68-.52-.01-.53.63-.01 1.080.58 1.230.82.72 1.210 1.870.87 2.330.66.07-.52.28-.87.51-1.070-1.780-.2-3.640-.89-3.640-3.950 0-.87.31-1.590.82-2.150-.08-.2-.36-1.020.08-2.120 0 0 .67-.21 2.200.82.64-.18 1.320-.27 2-.27.68 0 1.360.09 2 .27 1.530-1.040 2.200-.82 2.200-.82.44 1.100.16 1.920.08 2.120.51.56.82 1.270.82 2.150 0 3.070-1.870 3.750-3.650 3.950.29.25.54.73.54 1.480 0 1.070-.01 1.930-.01 2.200 0 .21.15.46.55.38A8.013 8.013 0 0 0 16 8c0-4.420-3.580-8-8-8z"/>`,
  code: svg`${tile("#fff")}<path fill="#2767aa" d="M74 34v20L33 86q-2 1-4-1l-2-3q-1-2 1-4z"/><path fill="#3478c6" d="M74 98V78L33 48q-2-2-4 0l-2 3q-1 2 1 4z"/><path fill="#4b9be8" d="M74 34l14 7q2 1 2 3v44q0 2-2 3l-14 7z"/>`,
  notion: svg`<path fill="#fff" d="M14 29q0-5 5-6l56-8q4-1 7 2l20 16q3 3 3 7v58q0 6-6 7l-58 8q-5 0-7-4L17 86q-2-3-2-6z"/><path fill="#000" d="M18 31q0-4 5-5l51-7q3 0 5 2l18 14q4 3 4 7v54q0 5-5 6l-54 6q-4 0-6-3L21 84q-2-2-2-6z"/><path fill="#fff" d="M25 30l48-7q2 0 3 1l14 12-50 5q-3 0-5-2zM37 51q0-4 4-4l52-5q3 0 3 3v49q0 4-4 4l-50 5q-4 0-4-4z"/><text x="67" y="93" transform="rotate(-5 67 75)" text-anchor="middle" font-family="Liberation Serif" font-weight="700" font-size="58" textLength="44" lengthAdjust="spacingAndGlyphs" fill="#000" stroke="#000" stroke-width="1.500">N</text>`,
  webex: svg`${tile("url(#dk-black)")}<path stroke="#3558e0" stroke-width="13" stroke-linecap="round" d="M92 53c-2 22-9 35-18 35"/><path stroke="#55c0ee" stroke-width="13" stroke-linecap="round" d="M26 53c2 22 9 35 18 35"/><path stroke="#3f6cf0" stroke-width="13" stroke-linecap="round" d="M44 88c13 0 14-43 29-43"/><path stroke="#3f6cf0" stroke-width="13" stroke-linecap="round" d="M74 88C60 88 59 45 45 45"/><path stroke="#6fdc72" stroke-width="12" stroke-linecap="round" d="M71 45.500c9-2 14 5 15 14"/>`,
  ms: svg`<circle cx="59.500" cy="76.500" r="41" fill="#f9f9fa"/><path fill="#dd5a3e" d="M38.400 54h20v20h-20z"/><path fill="#8ab53e" d="M60.800 54h20v20h-20z"/><path fill="#4f9fe4" d="M38.400 77h20v20h-20z"/><path fill="#f2b94a" d="M60.800 77h20v20h-20z"/><path fill="#7fba6d" d="M51 12h17v15h13L59.500 49 38 27h13z"/>`,
  edit: svg`${tile("#fafafa")}<path stroke="#a8a8a8" stroke-width="1.800" d="M14 44h91M14 55h91M14 66h91M14 77h91M14 88h91M15 99h88"/><path stroke="#ecc2c0" stroke-width="1.500" d="M29 22v90"/><path fill="#3c3c3c" d="M49 116l2-16 5 2z"/><path fill="#8b949b" d="M51 101L92 14q3-3 7 1L57 103z"/><path fill="#7fa8cf" d="M68 66l24-52q3-2 6 1L74 68z"/><path stroke="#e6edf3" stroke-width="1.500" d="M55 99L95 19"/>`,
  txt: svg`<path fill="#23282d" d="M21 20h76v8h5v66H17V28h4z"/><path fill="#f7f7f7" d="M23.500 23H71l24.500 26v69h-72z"/><path fill="#d9d9d9" d="M71 23v25h24.500z"/><path stroke="#8d8d8d" stroke-width="1.500" stroke-dasharray="5 1" d="M28 29h20M28 32h12M28 35h14M28 38h16M28 41h12M28 44h24M28 47h14"/><text x="59.500" y="110" text-anchor="middle" font-family="Inter" font-size="14.500" fill="#666">TXT</text>`,
  trash: svg`<path fill="url(#dk-trash)" d="M20 27h80l-9 82q-1 8-31 8t-30-8z"/><ellipse cx="60" cy="27" rx="40" ry="8" fill="#9da09b"/><path fill="#e9e9e9" d="M26 28l8-12 8 6 5-9 8 10 12-9 8 12 10-4 8 10-18 6H36z"/><path fill="#5a4a44" d="M40 20l10 12H36zM64 18l12 10-14 6z"/><path fill="#4a4a4a" d="M84 24l8 5-12 4zM28 24l6 2-4 4z"/><path fill="#4ab7d8" d="M48 22l10 3-8 7z"/><path fill="#c7683a" d="M73 20l8 9h-9z"/><path stroke="#e8e8e6" stroke-width="2" d="M21 29q39 14 78 0"/>`,
};

@customElement("app-dock")
class AppDock extends LitElement {
  static styles = css`
    :host { display: flex; box-sizing: border-box; width: 3215px; height: 142px; padding: 0 5px; border-radius: 40px; border: 2px solid rgba(255, 255, 255, .2);
      background: linear-gradient(90deg, #71785b, #7a805c 45%, #899059); background-clip: border-box; }
    .slot { width: 119.100px; height: 142px; margin-top: -2px; position: relative; display: flex; flex: none; }
    svg { overflow: visible; filter: drop-shadow(0 1.500px 1px rgba(0, 0, 0, .3)); }
    .defs { position: absolute; width: 0; height: 0; }
    .dot { position: absolute; left: 55.500px; top: 130px; width: 8px; height: 8px; border-radius: 50%; background: #0b0c08; }
    .rule { width: 2px; height: 106px; margin: 16px 26px 0; background: #4e5430; flex: none; }
  `;
  render() {
    const grad = (id: string, ...c: string[]) => svg`<linearGradient id=${id} x1="0" y1="0" x2="0" y2="1">${c.map((k, i) => svg`<stop offset=${i / (c.length - 1)} stop-color=${k}/>`)}</linearGradient>`;
    const slot = (k: string, dot = false): TemplateResult => html`<div class="slot">${icon(142, "0 0 119 142", D[k], 119)}${dot ? html`<i class="dot"></i>` : ""}</div>`;
    return html`
      <svg class="defs"><defs>
        ${grad("dk-white", "#f3f3f7", "#ced6e4")}${grad("dk-finder", "#5ec6f8", "#3a72ec")}${grad("dk-safari", "#4aa7ec", "#3a6fe0")}
        ${grad("dk-mail", "#3b6fe9", "#5cc3f7")}${grad("dk-key", "#5cc2f8", "#3563ea")}${grad("dk-gear", "#d3dfe6", "#8b8d8e")}
        ${grad("dk-wa", "#86f284", "#58bd48")}${grad("dk-phone", "#f3b79a", "#ee8f96", "#e7e0e0")}${grad("dk-dark", "#232a3c", "#0c0f16")}
        ${grad("dk-git", "#8436a8", "#55318f")}${grad("dk-black", "#2e2e30", "#0a0a0a")}${grad("dk-trash", "#d2d4d0", "#e6e6e4", "#b9bab6")}
      </defs></svg>
      ${slot("finder", true)}${slot("launch")}${slot("chrome", true)}${slot("safari")}${slot("mail")}${slot("cal")}${slot("notes")}${slot("keynote")}${slot("settings")}${slot("spotify")}
      ${slot("outlook")}${slot("excel", true)}${slot("whatsapp")}${slot("word")}${slot("ncal")}${slot("ring")}${slot("phone")}${slot("replit")}${slot("github")}${slot("code")}
      <i class="rule"></i>
      ${slot("notion")}${slot("webex")}${slot("ms", true)}${slot("edit")}
      <i class="rule"></i>
      ${slot("txt")}${slot("trash")}`;
  }
}

/* ---------------------------------------------------------------- desktop */

@customElement("app-root")
class AppRoot extends LitElement {
  static styles = css`
    :host { display: block; width: 3420px; height: 2214px; }
    .desktop { position: relative; width: 3420px; height: 2214px; overflow: hidden; display: flex; flex-direction: column; justify-content: space-between;
      background: linear-gradient(180deg, #8095cc 0 120px, #26300f 400px, #2a3410); }
    .grass { position: absolute; left: 0; top: 2030px; }
    menu-bar, app-dock { position: relative; z-index: 2; flex: none; }
    app-dock { margin: 0 0 10px 102px; }
    .sheet { position: absolute; left: 0; top: 77px; width: 3420px; height: 1979px; border-radius: 26px; overflow: hidden; background: #8b8b8b; }
    .edge { width: 16px; margin-left: 3404px; height: 1979px; display: flex; flex-direction: column; }
    .e1 { height: 66px; background: #4b9065; }
    .e2 { height: 208px; background: #c1c1c1; }
    .e3 { height: 60px; background: #d3cdb8; border-top: 2px solid #a9a9a9; border-bottom: 2px solid #b0aa92; }
    .e4 { height: 60px; background: #d3cdb8; border-bottom: 2px solid #a39d86; }
    .e5 { height: 52px; background: #d5d5d5; border-bottom: 5px double #808080; }
    .rows { flex: 1; background: repeating-linear-gradient(180deg, #d8d8d8 0 46px, #acacac 46px 48px); background-position: 0 16px; }
    .e6 { height: 102px; background: linear-gradient(180deg, #bdbdbd, #a8a8a8); border-top: 2px solid #999; }
    .foot { position: absolute; left: 0; right: 0; bottom: 0; height: 12px; }
    .foot i { position: absolute; top: 0; height: 2px; background: #4a4a4a; }
    .window { position: absolute; left: 0; top: 78px; width: 3404px; height: 1966px; border-radius: 22px; overflow: hidden;
      box-shadow: 0 0 0 1.500px rgba(20, 20, 20, .5), 0 0 5px rgba(0, 0, 0, .25); }
    .spark { position: absolute; left: 1946px; top: 2041px; width: 6px; height: 3px; border-radius: 3px 3px 0 0; background: #f08546; }
  `;
  render() {
    return html`
      <div class="desktop">
        <svg class="grass" width="3420" height="184">
          <filter id="blades" x="0" y="0" width="100%" height="100%" color-interpolation-filters="sRGB">
            <feTurbulence type="fractalNoise" baseFrequency=".04 .09" numOctaves="4" seed="7"/>
            <feColorMatrix values=".65 .2 0 0 -.26  .65 .3 0 0 -.265  .25 .05 0 0 -.09  0 0 0 0 1"/>
          </filter>
          <rect width="3420" height="184" filter="url(#blades)"/>
        </svg>
        <div class="sheet">
          <div class="edge"><i class="e1"></i><i class="e2"></i><i class="e3"></i><i class="e4"></i><i class="e5"></i><i class="rows"></i><i class="e6"></i></div>
          <div class="foot">
            ${[[146, 21], [212, 6], [226, 10], [638, 7], [2877, 28], [2949, 28]].map(([x, w]) => html`<i style="left:${x}px;width:${w}px"></i>`)}
            <i style="left:2782px;width:74px;height:12px;background:#6a6a6a"></i>
            <i style="left:3150px;width:18px;height:5px;border-radius:0 0 9px 9px;background:#c4c4c4"></i>
          </div>
        </div>
        <div class="window">
          <browser-chrome></browser-chrome>
          <site-page></site-page>
        </div>
        <i class="spark"></i>
        <menu-bar></menu-bar>
        <app-dock></app-dock>
      </div>`;
  }
}
